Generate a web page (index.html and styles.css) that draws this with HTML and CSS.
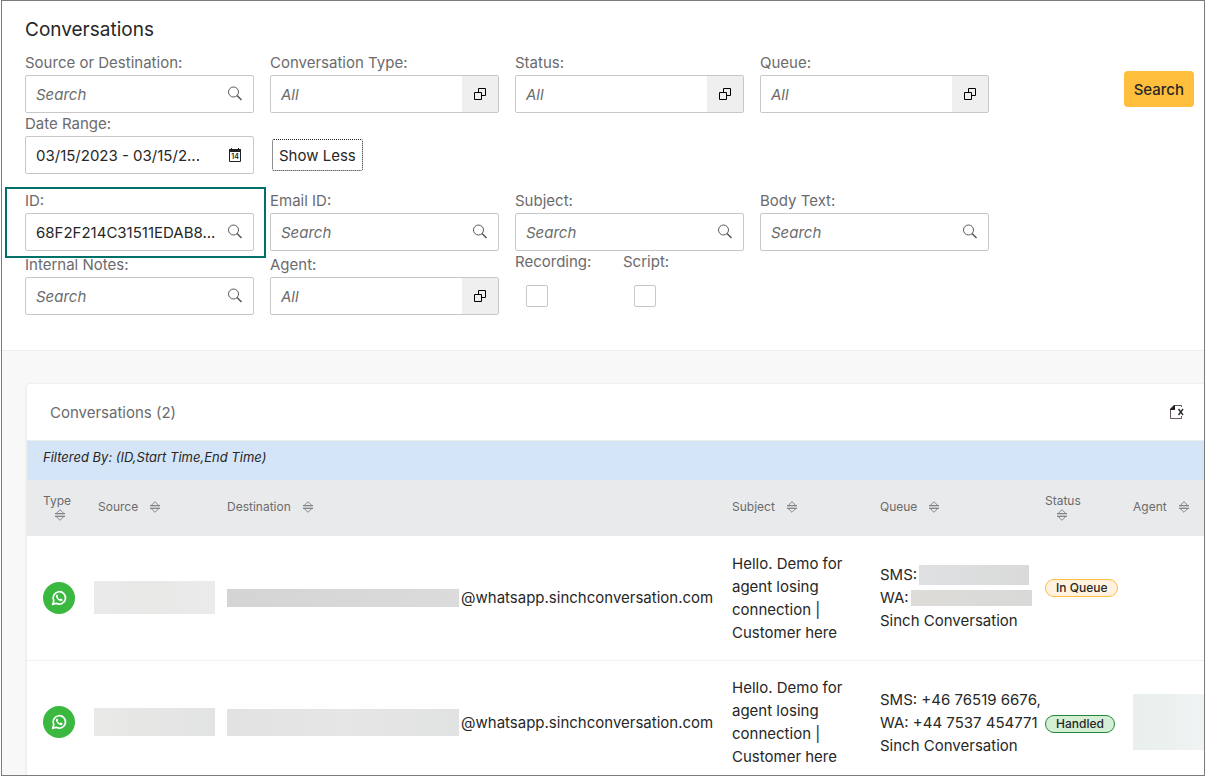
FILE: index.html
```html
<!DOCTYPE html>
<html lang="en">
<head>
    <meta charset="UTF-8">
    <meta name="viewport" content="width=device-width, initial-scale=1.0">
    <title>Conversations</title>
    <link rel="stylesheet" href="styles.css">
</head>
<body>

<!-- Shared icons -->
<svg class="icon-defs" aria-hidden="true">
    <symbol id="icon-search" viewBox="0 0 16 16">
        <circle cx="6.5" cy="6" r="5" fill="none" stroke="currentColor"/>
        <path d="M10 9.500L14.500 14" fill="none" stroke="currentColor" stroke-width="1.600"/>
    </symbol>
    <symbol id="icon-picker" viewBox="0 0 16 16">
        <path d="M6.500 6V2.500h7v7H10M2.500 6.500h7v7h-7z" fill="none" stroke="currentColor"/>
    </symbol>
    <symbol id="icon-export" viewBox="0 0 16 16">
        <path d="M12.500 3V1.500H5M1.500 5v9.500h11V12" fill="none" stroke="#6b5555"/>
        <path d="M1 6V5l4-4h1v5z" fill="#222"/>
        <path d="M9.500 5l4.500 6M14 5l-4.500 6" stroke="#222" stroke-width="1.300"/>
    </symbol>
    <symbol id="icon-sort" viewBox="0 0 10 12">
        <path d="M.7 5L5 .7 9.300 5M.7 7L5 11.300 9.300 7" fill="none" stroke="#858587"/>
        <path d="M0 4.500h10M0 7.500h10" stroke="#858587"/>
        <path d="M0 5.500h10M0 6.500h10" stroke="#c8c9ca"/>
    </symbol>
    <symbol id="icon-whatsapp" viewBox="0 0 32 32">
        <circle cx="16" cy="16" r="16" fill="#3ab83f"/>
        <path d="M9.700 22.400l1.100-3.700a6.200 6.200 0 1 1 2.500 2.600z" fill="none" stroke="#fff" stroke-width="1.700" stroke-linejoin="round"/>
        <path d="M13.600 12.800c-1.300 1-.6 3 1.100 4.700 1.800 1.700 3.700 2.300 4.700 1.100.4-.6.3-1-.2-1.300l-1.400-.7c-.4-.1-.6.1-.9.600-.9-.2-2-1.300-2.300-2.200.5-.4.600-.6.500-1l-.6-1.300c-.2-.3-.5-.2-.9.100z" fill="#fff"/>
    </symbol>
</svg>

<div class="app">
    <section class="filters">
        <h1 class="page-title">Conversations</h1>
        <form class="filter-form">
            <div class="filter-groups">
                <div class="filter-grid">
                    <div class="field">
                        <label for="source">Source or Destination:</label>
                        <div class="control">
                            <input type="text" id="source" placeholder="Search">
                            <button type="button" class="control-icon" aria-label="Search source"><svg><use href="#icon-search"/></svg></button>
                        </div>
                    </div>
                    <div class="field">
                        <label for="convType">Conversation Type:</label>
                        <div class="control">
                            <input type="text" id="convType" placeholder="All">
                            <button type="button" class="control-icon picker" aria-label="Choose type"><svg><use href="#icon-picker"/></svg></button>
                        </div>
                    </div>
                    <div class="field">
                        <label for="status">Status:</label>
                        <div class="control">
                            <input type="text" id="status" placeholder="All">
                            <button type="button" class="control-icon picker" aria-label="Choose status"><svg><use href="#icon-picker"/></svg></button>
                        </div>
                    </div>
                    <div class="field">
                        <label for="queue">Queue:</label>
                        <div class="control">
                            <input type="text" id="queue" placeholder="All">
                            <button type="button" class="control-icon picker" aria-label="Choose queue"><svg><use href="#icon-picker"/></svg></button>
                        </div>
                    </div>
                    <div class="field">
                        <label for="dateRange">Date Range:</label>
                        <div class="control">
                            <input type="text" id="dateRange" value="03/15/2023 - 03/15/2...">
                            <button type="button" class="control-icon dark" aria-label="Open calendar">
                                <svg viewBox="0 0 16 16">
                                    <path d="M2.500 3v11.500h11V3" fill="none" stroke="currentColor"/>
                                    <path d="M2 2h2V1h1v1h6V1h1v1h2v3H2z" fill="currentColor"/>
                                    <text x="8" y="12" font-size="7" font-weight="600" text-anchor="middle" fill="currentColor">14</text>
                                </svg>
                            </button>
                        </div>
                    </div>
                    <div class="toggle-cell">
                        <button type="button" class="btn-toggle">Show Less</button>
                    </div>
                </div>

                <div class="filter-grid filter-grid-more">
                    <div class="field highlighted">
                        <label for="convId">ID:</label>
                        <div class="control">
                            <input type="text" id="convId" value="68F2F214C31511EDAB8...">
                            <button type="button" class="control-icon" aria-label="Search ID"><svg><use href="#icon-search"/></svg></button>
                        </div>
                    </div>
                    <div class="field">
                        <label for="emailId">Email ID:</label>
                        <div class="control">
                            <input type="text" id="emailId" placeholder="Search">
                            <button type="button" class="control-icon" aria-label="Search email ID"><svg><use href="#icon-search"/></svg></button>
                        </div>
                    </div>
                    <div class="field">
                        <label for="subject">Subject:</label>
                        <div class="control">
                            <input type="text" id="subject" placeholder="Search">
                            <button type="button" class="control-icon" aria-label="Search subject"><svg><use href="#icon-search"/></svg></button>
                        </div>
                    </div>
                    <div class="field">
                        <label for="bodyText">Body Text:</label>
                        <div class="control">
                            <input type="text" id="bodyText" placeholder="Search">
                            <button type="button" class="control-icon" aria-label="Search body text"><svg><use href="#icon-search"/></svg></button>
                        </div>
                    </div>
                    <div class="field last-row">
                        <label for="notes">Internal Notes:</label>
                        <div class="control">
                            <input type="text" id="notes" placeholder="Search">
                            <button type="button" class="control-icon" aria-label="Search notes"><svg><use href="#icon-search"/></svg></button>
                        </div>
                    </div>
                    <div class="field last-row">
                        <label for="agent">Agent:</label>
                        <div class="control">
                            <input type="text" id="agent" placeholder="All">
                            <button type="button" class="control-icon picker" aria-label="Choose agent"><svg><use href="#icon-picker"/></svg></button>
                        </div>
                    </div>
                    <div class="checks">
                        <div class="check">
                            <label for="recording">Recording:</label>
                            <input type="checkbox" id="recording">
                        </div>
                        <div class="check">
                            <label for="script">Script:</label>
                            <input type="checkbox" id="script">
                        </div>
                    </div>
                </div>
            </div>
            <button type="submit" class="btn-search">Search</button>
        </form>
    </section>

    <main class="results">
        <div class="card">
            <div class="card-header">
                <h2>Conversations (2)</h2>
                <button type="button" class="btn-export" aria-label="Export"><svg><use href="#icon-export"/></svg></button>
            </div>
            <p class="filtered-by">Filtered By: (ID,Start Time,End Time)</p>
            <table class="conv-table">
                <colgroup>
                    <col class="col-type">
                    <col class="col-source">
                    <col class="col-destination">
                    <col class="col-subject">
                    <col class="col-queue">
                    <col class="col-status">
                    <col class="col-agent">
                </colgroup>
                <thead>
                    <tr>
                        <th><div class="heading stacked">Type <svg><use href="#icon-sort"/></svg></div></th>
                        <th><div class="heading">Source <svg><use href="#icon-sort"/></svg></div></th>
                        <th><div class="heading">Destination <svg><use href="#icon-sort"/></svg></div></th>
                        <th><div class="heading">Subject <svg><use href="#icon-sort"/></svg></div></th>
                        <th><div class="heading">Queue <svg><use href="#icon-sort"/></svg></div></th>
                        <th><div class="heading stacked">Status <svg><use href="#icon-sort"/></svg></div></th>
                        <th><div class="heading">Agent <svg><use href="#icon-sort"/></svg></div></th>
                    </tr>
                </thead>
                <tbody>
                    <tr>
                        <td><svg class="channel"><use href="#icon-whatsapp"/></svg></td>
                        <td class="cell-source"><div class="mask mask-source"></div></td>
                        <td><div class="address"><div class="mask mask-address"></div>@whatsapp.sinchconversation.com</div></td>
                        <td>Hello. Demo for<br>agent losing<br>connection |<br>Customer here</td>
                        <td>
                            <div class="line">SMS: <div class="mask mask-sms"></div></div>
                            <div class="line">WA: <div class="mask mask-wa"></div></div>
                            <div class="line">Sinch Conversation</div>
                        </td>
                        <td class="cell-pending"><span class="badge badge-queue">In Queue</span></td>
                        <td></td>
                    </tr>
                    <tr>
                        <td><svg class="channel"><use href="#icon-whatsapp"/></svg></td>
                        <td class="cell-source"><div class="mask mask-source light"></div></td>
                        <td><div class="address"><div class="mask mask-address light"></div>@whatsapp.sinchconversation.com</div></td>
                        <td>Hello. Demo for<br>agent losing<br>connection |<br>Customer here</td>
                        <td>
                            <div class="line">SMS: +46 76519 6676,</div>
                            <div class="line">WA: +44 7537 454771</div>
                            <div class="line">Sinch Conversation</div>
                        </td>
                        <td><span class="badge badge-handled">Handled</span></td>
                        <td class="cell-agent"><div class="mask mask-agent"></div></td>
                    </tr>
                </tbody>
            </table>
        </div>
    </main>
</div>

</body>
</html>
```

FILE: styles.css
```css
* {
    box-sizing: border-box;
}
body {
    margin: 0;
    padding-left: 1px;
    font-family: Inter, "Open Sans", sans-serif;
    font-size: 15px;
    line-height: 23px;
    color: #272727;
    background-color: #ffffff;
}
input, button {
    font-family: inherit;
    font-size: inherit;
    color: inherit;
}
svg {
    display: block;
    width: 16px;
    height: 16px;
}
.icon-defs {
    position: absolute;
    width: 0;
    height: 0;
}
.app {
    display: flex;
    flex-direction: column;
    height: 100vh; /* Results run on below the fold */
    overflow: hidden;
    border: 1px solid #7b7b7b;
    background-color: #f8f8f8;
}

/* Filter area */
.filters {
    flex: none;
    padding: 16px 10px 32px 23px;
    background-color: #ffffff;
    border-bottom: 1px solid #ededed;
}
.page-title {
    margin: 0 0 10px;
    font-size: 19px;
    font-weight: 400;
    line-height: 25px;
}
.filter-form {
    display: flex;
    justify-content: space-between;
    align-items: flex-start;
    gap: 16px;
}
.filter-groups {
    flex: 0 1 964px;
}
.filter-grid {
    display: grid;
    grid-template-columns: repeat(4, 1fr);
    column-gap: 16px;
}
.filter-grid-more {
    margin-top: 16px;
}
.field {
    position: relative;
    min-width: 0;
}
.field.last-row {
    margin-top: 3px;
}
.field label, .check label {
    display: block;
    padding-bottom: 1px;
    line-height: 22px;
    color: #6b6b6d;
}
.control {
    display: flex;
    height: 38px;
    border: 1px solid #c8c8c8;
    border-radius: 2px;
    background-color: #ffffff;
}
.control input {
    flex: 1;
    min-width: 0;
    padding: 0 0 0 10px;
    border: 0;
    outline: none;
    background: none;
}
.control input::placeholder {
    color: #6b6b6d;
    font-style: italic;
    opacity: 1;
}
.control-icon {
    display: flex;
    flex: none;
    align-items: center;
    justify-content: center;
    width: 36px;
    padding: 0;
    border: 0;
    background: none;
    color: #5a5a5c;
}
.control-icon.dark {
    color: #222222;
}
.control-icon.picker {
    background-color: #efefef;
    color: #000000;
}
/* Frame around the field being pointed out */
.highlighted::after {
    content: "";
    position: absolute;
    z-index: 1;
    top: -3px;
    right: -12px;
    bottom: -7px;
    left: -20px;
    border: 2px solid #00706a;
    pointer-events: none;
}
.toggle-cell {
    padding: 26px 2px 0;
}
.btn-toggle {
    height: 32px;
    padding: 0 6px;
    border: 1px dotted #222222;
    border-radius: 2px;
    background-color: #ffffff;
}
.checks {
    display: flex;
}
.check {
    width: 108px;
}
.check input {
    display: block;
    appearance: none;
    width: 22px;
    height: 22px;
    margin: 11px;
    border: 1px solid #c8c8c8;
    border-radius: 2px;
    background-color: #ffffff;
}
.btn-search {
    height: 36px;
    margin-top: 19px;
    padding: 0 10px;
    border: 0;
    border-radius: 4px;
    background-color: #ffbe3c;
    font-weight: 500;
}

/* Results */
.results {
    padding: 32px 0 0 23px;
}
.card {
    border: 1px solid #f0f0f0;
    border-right: 0;
    border-left-width: 2px;
    border-radius: 5px 0 0 0;
    background-color: #ffffff;
}
.card-header {
    display: flex;
    justify-content: space-between;
    align-items: center;
    height: 57px;
    padding: 0 19px 0 23px;
    border-bottom: 1px solid #ededed;
}
.card-header h2 {
    margin: 0;
    font-size: 15px;
    font-weight: 400;
    color: #6b6b6d;
}
.btn-export {
    padding: 0;
    border: 0;
    background: none;
}
.filtered-by {
    height: 39px;
    margin: 0;
    padding: 5px 16px;
    background-color: #d4e5f7;
    font-size: 13px;
    font-style: italic;
}
.conv-table {
    width: 100%;
    table-layout: fixed;
    border-collapse: collapse;
}
.col-type { width: 55px; }
.col-source { width: 129px; }
.col-subject { width: 148px; }
.col-queue { width: 165px; }
.col-status { width: 88px; }
.col-agent { width: 87px; }
.conv-table th {
    height: 56px;
    padding: 0 0 3px 16px;
    background-color: #e9eaeb;
    font-size: 12px;
    font-weight: 400;
    line-height: 15px;
    text-align: left;
    color: #6b6b6d;
}
.heading {
    display: flex;
    align-items: center;
    gap: 12px;
}
.heading svg {
    width: 10px;
    height: 12px;
}
.heading.stacked {
    flex-direction: column;
    align-items: flex-start;
    gap: 1px;
}
.heading.stacked svg {
    margin-left: 12px;
}
.conv-table td {
    height: 124px;
    padding: 0 0 0 16px;
    border-bottom: 1px solid #f0f0f0;
    white-space: nowrap;
}
.conv-table td.cell-source {
    padding-left: 12px;
}
.conv-table td.cell-pending {
    padding-bottom: 23px;
}
.channel {
    width: 32px;
    height: 32px;
}
.address, .line {
    display: flex;
    align-items: center;
    gap: 2px;
}

/* Masked personal data */
.mask {
    flex: none;
    background: linear-gradient(to right, #d4d4d4, #dadbda);
}
.mask-source {
    width: 121px;
    height: 33px;
    background: linear-gradient(to right, #eaeaea, #e8e8e7, #ebebeb);
}
.mask-source.light {
    height: 28px;
    background: linear-gradient(to right, #e9e9e7, #e2e4e3);
}
.mask-address {
    width: 232px;
    height: 18px;
}
.mask-address.light {
    height: 27px;
    background: linear-gradient(to right, #e2e2e2, #e6e6e6, #e1e2e2);
}
.mask-sms {
    width: 110px;
    height: 20px;
    background: linear-gradient(to right, #dfe0e2, #d9dad9);
}
.mask-wa {
    width: 121px;
    height: 16px;
    background: linear-gradient(to right, #dddcd8, #d9d9d8);
}
.mask-agent {
    height: 56px;
    background: linear-gradient(to right, #e8efed, #eff3f3);
}
.badge {
    display: inline-block;
    padding: 0 10px;
    border: 1px solid #ffbe3c;
    border-radius: 9px;
    font-size: 12px;
    font-weight: 500;
    line-height: 16px;
}
.badge-queue {
    background-color: #fff3e0;
}
.badge-handled {
    border-color: #238636;
    background-color: #d5efd6;
}
```
